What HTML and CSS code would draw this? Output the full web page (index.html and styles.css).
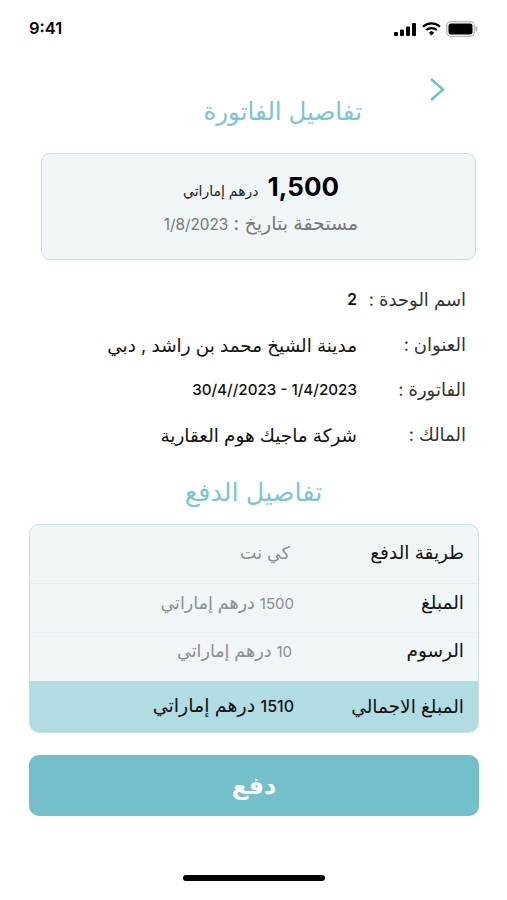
FILE: index.html
```html
<!DOCTYPE html>
<html lang="ar" dir="rtl">
<head>
<meta charset="utf-8">
<title>تفاصيل الفاتورة</title>
<link rel="stylesheet" href="styles.css">
</head>
<body>
<div class="screen">
  <div class="status" dir="ltr">
    <span class="time">9:41</span>
    <span class="status-icons">
      <svg width="23" height="13" viewBox="0 0 23 13"><rect x="0" y="9" width="4" height="4" rx="1"/><rect x="6" y="6.500" width="4" height="6.500" rx="1"/><rect x="12" y="3.500" width="4" height="9.500" rx="1"/><rect x="18" y="0" width="4" height="13" rx="1"/></svg>
      <svg width="19" height="14" viewBox="0 0 19 14"><path d="M1 4.800C6 .3 13 .3 18 4.800" fill="none" stroke="#000" stroke-width="2.200"/><path d="M4.200 8C7.200 5.400 11.800 5.400 14.800 8" fill="none" stroke="#000" stroke-width="2.200"/><path d="M6.800 10.700 9.500 8.700 12.200 10.700 9.500 13.500Z"/></svg>
      <svg width="32" height="16" viewBox="0 0 32 16"><rect x=".7" y=".7" width="27.600" height="14.600" rx="4" fill="none" stroke="#b5b5b5" stroke-width="1.300"/><rect x="2.500" y="2.500" width="24" height="11" rx="2.500"/><rect x="29.500" y="5.500" width="1.800" height="5" rx=".9" fill="#b5b5b5"/></svg>
    </span>
  </div>

  <div class="back">
    <svg width="16" height="25" viewBox="0 0 16 25"><path d="M2 2 14 12.500 2 23" fill="none" stroke="#73c0ca" stroke-width="2.600"/></svg>
  </div>
  <h1 class="title title-invoice">تفاصيل الفاتورة</h1>

  <section class="due">
    <div class="due-amount"><span class="amount" dir="ltr">1,500</span><span class="currency">درهم إماراتي</span></div>
    <div class="due-date">مستحقة بتاريخ : <span class="num" dir="ltr">1/8/2023</span></div>
  </section>

  <dl class="info">
    <div class="info-row"><dt>اسم الوحدة :</dt><dd class="unit">2</dd></div>
    <div class="info-row"><dt>العنوان :</dt><dd>مدينة الشيخ محمد بن راشد , دبي</dd></div>
    <div class="info-row"><dt>الفاتورة :</dt><dd class="num" dir="ltr">30/4//2023 - 1/4/2023</dd></div>
    <div class="info-row"><dt>المالك :</dt><dd>شركة ماجيك هوم العقارية</dd></div>
  </dl>

  <h2 class="title title-pay">تفاصيل الدفع</h2>

  <section class="pay">
    <div class="pay-row pay-first"><span class="pay-label">طريقة الدفع</span><span class="pay-value">كي نت</span></div>
    <div class="pay-row pay-mid"><span class="pay-label">المبلغ</span><span class="pay-value"><span class="num">1500</span> درهم إماراتي</span></div>
    <div class="pay-row pay-third"><span class="pay-label">الرسوم</span><span class="pay-value"><span class="num">10</span> درهم إماراتي</span></div>
    <div class="pay-row pay-total"><span class="pay-label">المبلغ الاجمالي</span><span class="pay-value"><span class="num">1510</span> درهم إماراتي</span></div>
  </section>

  <button class="pay-btn" type="button">دفع</button>

  <div class="home-bar"></div>
</div>
</body>
</html>
```
FILE: styles.css
```css
* { box-sizing: border-box; }
html, body { margin: 0; padding: 0; background: #fff; }
body { font-family: "Inter", "DejaVu Sans", sans-serif; color: #111; }
.screen { width: 507px; height: 900px; overflow: hidden; display: flex; flex-direction: column; }

.status { height: 58px; padding: 18px 29px 0 29px; display: flex; justify-content: space-between; align-items: flex-start; }
.time { font-size: 16.500px; font-weight: 600; line-height: 20px; color: #000; }
.status-icons { display: flex; align-items: center; gap: 5px; height: 22px; }

.back { height: 25px; margin-top: 19px; padding-right: 62px; display: flex; justify-content: flex-start; }

.title { margin: 0; font-weight: 400; color: #7cc5d0; line-height: 28px; }
.title-invoice { margin-top: -5px; padding-right: 145px; font-size: 24.500px; }
.title-pay { margin-top: 21px; text-align: center; font-size: 25.500px; }

.due { margin: 28px 31px 0 41px; height: 107px; background: #f0f5f8; border: 1px solid #c3e2e6; border-radius: 9px; display: flex; flex-direction: column; align-items: center; padding: 15px 0 0 5px; }
.due-amount { display: flex; align-items: center; gap: 9px; height: 36px; }
.amount { font-size: 26px; font-weight: 700; color: #000; line-height: 36px; }
.currency { font-size: 14px; color: #222; padding-top: 7px; }
.due-date { margin-top: 8px; font-size: 19px; color: #777; line-height: 22px; }
.due-date .num { font-size: 15.300px; }

.info { margin: 17px 41px 0 0; }
.info-row { height: 45px; display: flex; align-items: center; }
.info-row dt { width: 109px; flex: none; font-size: 18px; color: #333; }
.info-row dd { margin: 0; font-size: 18.400px; color: #111; }
.info-row dd.unit { font-size: 15.500px; font-weight: 600; }
.info-row dd.num { font-size: 15.200px; font-weight: 500; }

.pay { margin: 18px 28px 0 29px; height: 209px; border: 1px solid #c3e2e6; border-radius: 10px; overflow: hidden; background: #f0f5f8; display: flex; flex-direction: column; }
.pay-row { display: flex; align-items: center; padding-right: 14px; }
.pay-first { height: 59px; padding-bottom: 4px; border-bottom: 1px solid #e2ebee; }
.pay-mid { height: 49px; padding-bottom: 12px; border-bottom: 1px solid #e9eff2; }
.pay-third { height: 48px; padding-bottom: 14px; }
.pay-total { flex: 1; padding-bottom: 2px; background: #b2dce3; }
.pay-label { width: 170px; flex: none; font-size: 18.500px; color: #111; }
.pay-value { font-size: 17.500px; color: #8a8f91; }
.pay-first .pay-value { margin-right: 4px; }
.pay-third .pay-value { margin-right: 2px; }
.pay-value .num { font-size: 15px; }
.pay-total .pay-value { color: #111; font-size: 19px; }
.pay-total .pay-value .num { font-size: 16px; font-weight: 500; }

.pay-btn { margin: 22px 28px 0 29px; height: 61px; border: 0; border-radius: 10px; background: #73c0ca; color: #fff; font: 700 24px "DejaVu Sans", sans-serif; }

.home-bar { width: 142px; height: 6px; border-radius: 3px; background: #000; margin: 59px 182px 0 183px; }
```
